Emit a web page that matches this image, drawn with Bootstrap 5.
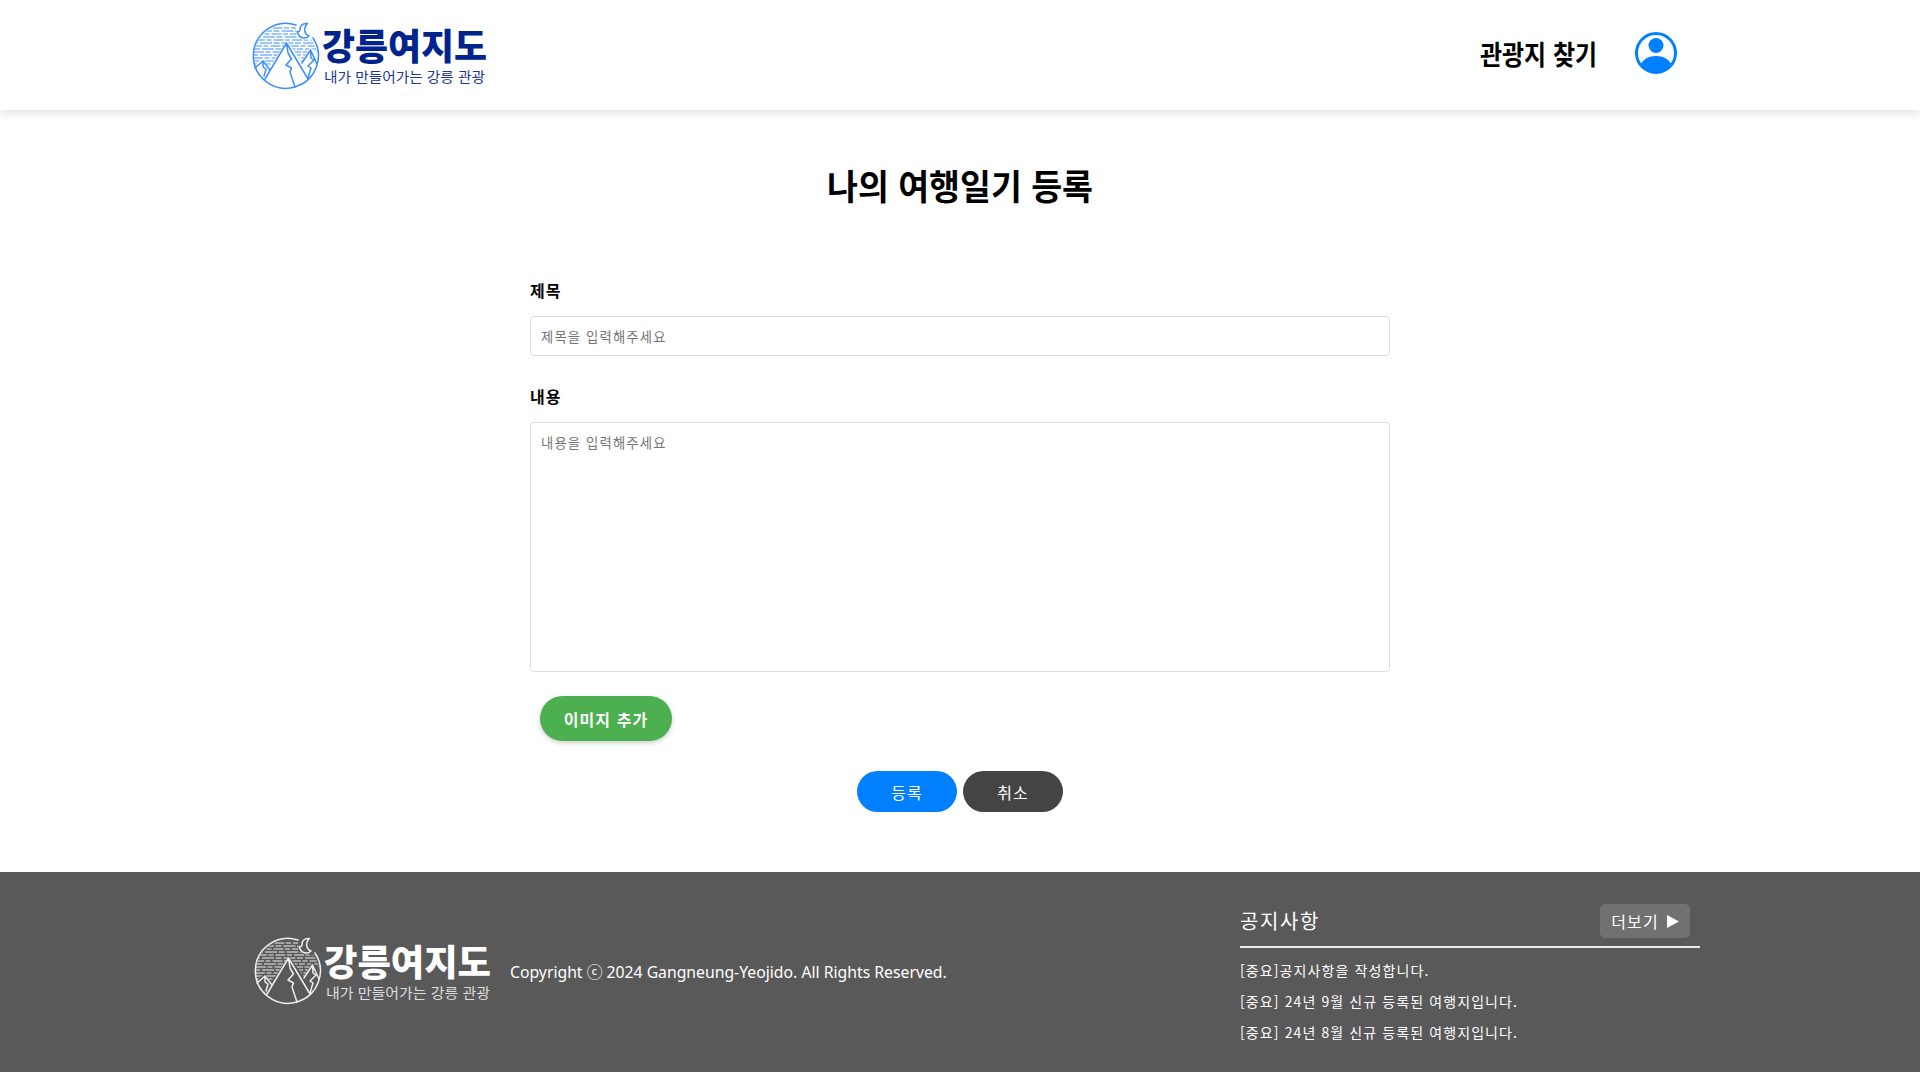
<!DOCTYPE html>
<html lang="ko">
<head>
<meta charset="utf-8">
<meta name="viewport" content="width=device-width, initial-scale=1">
<title>강릉여지도</title>
<link href="https://cdn.jsdelivr.net/npm/bootstrap@5.3.0/dist/css/bootstrap.min.css" rel="stylesheet">
<style>
body{font-family:"Noto Sans","Noto Sans CJK KR",sans-serif;color:#000;line-height:1.5;height:1072px;overflow:hidden}
svg text{font-family:"Noto Sans CJK KR",sans-serif}
svg{overflow:visible}
.site-head{height:110px;box-shadow:0 2px 10px rgba(0,0,0,.15);padding:0 241px 0 250px}
.brand-art{width:240px;height:76px;display:block}
.find-link{width:120px;height:40px;display:block}
.member-link{margin:0 2px 4px 36px}
.page-title{margin-top:53px;height:50px}
.diary-form{width:860px;margin-top:65px}
.field-label{font:700 16px/24px "Noto Sans CJK KR",sans-serif;letter-spacing:1px;display:block}
.field-box{border:1px solid #ddd;border-radius:4px;padding:9px 10px;font:13.33px/20px "Noto Sans CJK KR",sans-serif;letter-spacing:1.15px}
.field-box::placeholder{color:#757575;opacity:1}
.field-box.title-box{height:40px;margin:14px 0 28px}
.field-box.body-box{height:250px;margin-top:14px;padding-top:10px;resize:none}
.btn-image{width:132px;height:45px;margin:24px 0 0 10px;background:#4caf50;color:#fff;font:700 16px/24px "Noto Sans CJK KR",sans-serif;letter-spacing:1.1px;box-shadow:0 2px 5px rgba(0,0,0,.2)}
.btn-round{width:100px;height:41px;color:#fff;font:16px/24px "Noto Sans CJK KR",sans-serif;letter-spacing:1px}
.btn-save{background:#0080ff}
.btn-cancel{background:#444}
.action-row{gap:6px;margin-top:30px}
.site-foot{height:200px;margin-top:60px;background:#595959;color:#fff;padding:0 220px 0 252px}
.foot-copy{font-size:15.75px;margin-left:18px;padding-top:2px}
.news{width:460px;padding-top:32px}
.news-head{height:44px;border-bottom:2px solid #e8e8e8;padding-right:10px}
.news-title{font:20px/30px "Noto Sans CJK KR",sans-serif;letter-spacing:1.6px;padding-top:2px}
.more-link{width:90px;height:34px;border-radius:5px;background:#717171;font:16px/24px "Noto Sans CJK KR",sans-serif;letter-spacing:1.1px}
.news-item{font:14px/21px "Noto Sans CJK KR",sans-serif;height:31px;white-space:nowrap;letter-spacing:1.1px}
</style>
</head>
<body class="d-flex flex-column">
<svg width="0" height="0" class="position-absolute">
<defs>
<clipPath id="sky"><path d="M2 38C0 14 20 2 38 2L44 3 44 12 49 17 60 18 66 31 58 25 50 40 35 19 17 46 11 36 3 43Z"/></clipPath>
<symbol id="emblem" viewBox="0 0 68 68">
<g fill="none" stroke="currentColor" stroke-width="1.500" stroke-linejoin="round" stroke-linecap="round">
<path d="M44 3A32.500 32.500 0 1 0 61 16"/>
<path d="M55.500 1.500C50 1 48 4 48 7.500 48 10 46 10 45 9.500 47 16 53 18 57 14 52 12 51 6 55.500 1.500Z"/>
<path d="M13 57 34.500 21 56 57M34.500 21 36 31 39.500 37 34 43 39.500 46 38 50 43 65M3 46 11 39 18 48M11 39 11 45 14 47 12 54M50 41 58.500 28 65 42M58.500 28 59 36 62 38 56 44 59 46 56 56"/>
</g>
<g clip-path="url(#sky)" stroke="currentColor" stroke-width="1.200" fill="none">
<path stroke-dasharray="10 1.500 5 2" d="M2 6h64M1 12h64M3 18h64M0 24h64M2 30h64M1 36h64M2 42h64"/>
<path stroke-dasharray="6 2 12 1.500" d="M0 9h66M3 15h66M0 21h66M2 27h66M0 33h66M2 39h66"/>
</g>
</symbol>
</defs>
</svg>
<header class="site-head d-flex align-items-center justify-content-between flex-shrink-0">
<a href="#" class="text-decoration-none"><svg class="brand-art" viewBox="0 0 240 76">
<g color="#3c8eff"><use href="#emblem" x="2" y="5" width="68" height="68"/></g>
<text x="72" y="43" font-size="36" font-weight="900" fill="#00238c" textLength="165" lengthAdjust="spacingAndGlyphs">강릉여지도</text>
<text x="74" y="64.500" font-size="14" font-weight="400" fill="#20388f" textLength="161" lengthAdjust="spacingAndGlyphs">내가 만들어가는 강릉 관광</text>
</svg></a>
<nav class="d-flex align-items-center">
<a href="#" class="text-decoration-none"><svg class="find-link" viewBox="0 0 120 40"><text x="1" y="30" font-size="27" font-weight="700" textLength="117" lengthAdjust="spacingAndGlyphs">관광지 찾기</text></svg></a>
<a href="#" class="member-link"><svg class="d-block" width="42" height="42" viewBox="0 0 42 42"><clipPath id="face"><circle cx="21" cy="21" r="20"/></clipPath><circle cx="21" cy="21" r="19.500" fill="#fff" stroke="#0080ff" stroke-width="3"/><circle cx="21" cy="13.500" r="7.500" fill="#0080ff"/><path clip-path="url(#face)" fill="#0080ff" d="M5 33Q10 24 21 24T37 33L32 42H10Z"/></svg></a>
</nav>
</header>
<main class="d-flex flex-column align-items-center">
<h1 class="page-title mb-0"><svg class="d-block" width="268" height="50" viewBox="0 0 268 50"><text x="1" y="37" font-size="35" font-weight="700" textLength="266" lengthAdjust="spacingAndGlyphs">나의 여행일기 등록</text></svg></h1>
<form class="diary-form">
<label class="field-label" for="subject">제목</label>
<input id="subject" class="field-box title-box d-block w-100" placeholder="제목을 입력해주세요">
<label class="field-label" for="story">내용</label>
<textarea id="story" class="field-box body-box d-block w-100" placeholder="내용을 입력해주세요"></textarea>
<button type="button" class="btn-image d-block border-0 rounded-pill p-0">이미지 추가</button>
<div class="action-row d-flex justify-content-center">
<button type="button" class="btn-round btn-save border-0 rounded-pill p-0">등록</button>
<button type="button" class="btn-round btn-cancel border-0 rounded-pill p-0">취소</button>
</div>
</form>
</main>
<footer class="site-foot d-flex justify-content-between flex-shrink-0">
<div class="d-flex align-items-center">
<svg class="brand-art" viewBox="0 0 240 76">
<g color="#eee"><use href="#emblem" x="2" y="3" width="68" height="68"/></g>
<text x="72" y="42" font-size="36" font-weight="900" fill="#fff" textLength="167" lengthAdjust="spacingAndGlyphs">강릉여지도</text>
<text x="74" y="63.500" font-size="14" fill="#ddd" textLength="164" lengthAdjust="spacingAndGlyphs">내가 만들어가는 강릉 관광</text>
</svg>
<div class="foot-copy">Copyright ⓒ 2024 Gangneung-Yeojido. All Rights Reserved.</div>
</div>
<section class="news">
<div class="news-head d-flex justify-content-between align-items-start">
<div class="news-title">공지사항</div>
<a class="more-link d-flex align-items-center justify-content-center text-white text-decoration-none">더보기<svg class="ms-2" width="12" height="14" viewBox="0 0 12 14"><path d="M0 1 12 7.500 0 14Z" fill="#fff"/></svg></a>
</div>
<div class="pt-2 mt-1">
<div class="news-item">[중요]공지사항을 작성합니다.</div>
<div class="news-item">[중요] 24년 9월 신규 등록된 여행지입니다.</div>
<div class="news-item">[중요] 24년 8월 신규 등록된 여행지입니다.</div>
</div>
</section>
</footer>
<script src="https://cdn.jsdelivr.net/npm/bootstrap@5.3.0/dist/js/bootstrap.bundle.min.js"></script>
</body>
</html>
